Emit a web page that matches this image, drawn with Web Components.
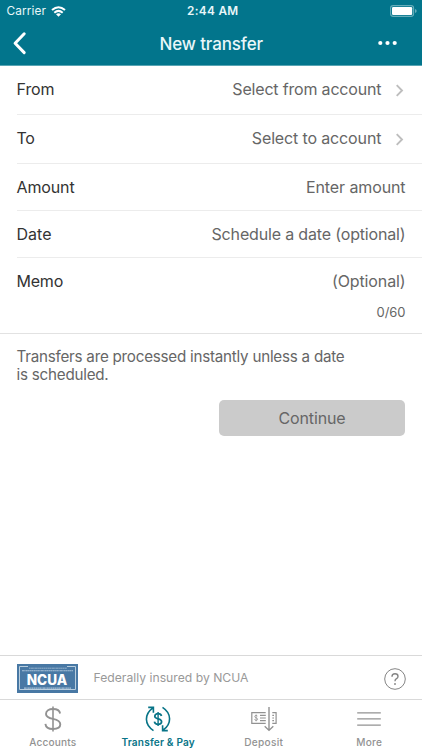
<!DOCTYPE html>
<html lang="en">
<head>
<meta charset="utf-8">
<title>New transfer</title>
<style>
html,body{margin:0;height:100%}
body{font-family:Inter,"Liberation Sans",sans-serif;background:#fff;overflow:hidden}
</style>
</head>
<body>
<transfer-app></transfer-app>
<script>
const define = (name, html, extra) => {
  const t = document.createElement('template');
  t.innerHTML = html;
  customElements.define(name, class extends HTMLElement {
    constructor() {
      super();
      this.attachShadow({mode: 'open'}).append(t.content.cloneNode(true));
    }
    connectedCallback() { if (extra) extra(this, this.shadowRoot); }
  });
};

/* A run of text whose tracking is tuned so that it spans the given width. */
define('fit-text', `<style>
:host{display:block;white-space:nowrap;width:max-content;flex:none}
span{display:inline-block}
</style><span><slot></slot></span>`, (el, root) => {
  const span = root.querySelector('span');
  const n = el.textContent.length;
  span.style.letterSpacing = '0px';
  const natural = span.getBoundingClientRect().width;
  const s = (+el.getAttribute('w') - natural) / n;
  span.style.letterSpacing = s.toFixed(3) + 'px';
});

define('status-bar', `<style>
:host{display:grid;grid-template-columns:1fr auto 1fr;align-items:center;height:22px;padding:0 5px 0 6.5px;color:#e9f7f9;font-size:11.8px;line-height:22px;box-sizing:border-box}
.l{display:flex;align-items:center;gap:5px}
.t{font-weight:600;margin-left:2px}
.r{justify-self:end}
svg{display:block}
</style>
<div class="l"><fit-text w="39.5">Carrier</fit-text>
<svg width="15" height="11" viewBox="0 0 15 11"><g fill="none" stroke="#fff" stroke-width="2"><path d="M1 4.1Q7.5-1.7 14 4.1"/><path d="M3.3 6.7Q7.5 3 11.7 6.7"/></g><path d="M5 8.2Q7.5 6.3 10 8.2L7.5 10.8Z" fill="#fff"/></svg></div>
<fit-text class="t" w="51.5">2:44 AM</fit-text>
<svg class="r" width="27" height="12" viewBox="0 0 27 12"><rect x=".6" y=".6" width="23" height="10.8" rx="2.6" fill="none" stroke="#65adba" stroke-width="1.1"/><rect x="2" y="2" width="20.2" height="8" rx="1.2" fill="#fff"/><path d="M25 4Q26.7 4.6 26.7 6T25 8Z" fill="#65adba"/></svg>`);

define('nav-bar', `<style>
:host{display:grid;grid-template-columns:1fr auto 1fr;align-items:center;height:43px;padding:0 24.5px 0 12px;box-sizing:border-box;color:#e9f7f9;font-size:17px;font-weight:500}
svg{display:block}.r{justify-self:end;margin-top:-2px}
.back{margin-top:-1px}
fit-text{margin-left:13px}
</style>
<svg class="back" width="16" height="24" viewBox="0 0 16 24"><path d="M12.2 2.8 3.1 12.2 12.2 21.6" fill="none" stroke="#fff" stroke-width="3" stroke-linecap="round" stroke-linejoin="round"/></svg>
<fit-text w="103.5">New transfer</fit-text>
<svg class="r" width="20" height="6" viewBox="0 0 20 6" fill="#fff"><circle cx="2.3" cy="3" r="2.1"/><circle cx="9.5" cy="3" r="2.1"/><circle cx="16.7" cy="3" r="2.1"/></svg>`);

define('form-row', `<style>
:host{display:flex;align-items:flex-start;justify-content:space-between;box-sizing:border-box;margin-left:16.5px;padding-right:16.5px;border-bottom:1px solid #ececec;font-size:16px;line-height:20px;color:#666}
.v{display:flex;align-items:center}
.label{color:#333}
.v svg{display:none}
:host([link]) .v svg{display:block;margin:2px 1.2px 0 15px}
</style><div class="label"><slot name="label"></slot></div>
<div class="v"><slot></slot><svg width="8" height="13" viewBox="0 0 8 13"><path d="M.7 1.2 6 6.5 .7 11.8" fill="none" stroke="#bebebe" stroke-width="1.9"/></svg></div>`);

define('primary-button', `<style>
:host{display:flex;align-items:center;justify-content:center;width:186px;height:36.5px;border-radius:5px;background:#cbcbcb;color:#666;font-size:16px}
</style><slot></slot>`);

define('ncua-badge', `<style>
:host{display:block;width:61px;height:29px}svg{display:block}
text{font-family:Inter,"Liberation Sans",sans-serif;font-weight:800;fill:#fff}
</style><svg width="61" height="29" viewBox="0 0 61 29">
<rect width="61" height="29" fill="#4878a4"/>
<path d="M11 2.5H2.5V25.5H58.5V2.5H50" fill="none" stroke="#b9cede" stroke-width="1"/>
<path d="M12 4.2H50" stroke="#a8c1d7" stroke-width="1" stroke-dasharray="1.5 .3 2.2 .2" opacity=".8"/>
<path d="M5 6.7H56" stroke="#a8c1d7" stroke-width="1.1" stroke-dasharray="2 .2 1.3 .3"/>
<path d="M7 24.2H54" stroke="#a8c1d7" stroke-width="1.3" stroke-dasharray="2 .3 1.2 .3"/>
<text x="9.7" y="20.8" font-size="14" textLength="40.5" lengthAdjust="spacingAndGlyphs">NCUA</text></svg>`);

define('insured-bar', `<style>
:host{display:flex;align-items:center;height:45px;box-sizing:border-box;border-top:1px solid #d9d9d9;border-bottom:1px solid #d9d9d9;padding:2px 16.5px 0;color:#999;font-size:12.2px}
fit-text{margin:-2px auto 0 16px}
svg{display:block}
</style><ncua-badge></ncua-badge><fit-text w="155">Federally insured by NCUA</fit-text>
<svg width="22" height="22" viewBox="0 0 22 22" fill="none" stroke="#858585"><circle cx="11" cy="11" r="10.3" stroke-width="1"/><path d="M8 8.7Q8 5.8 11 5.8T14 8.4Q14 9.8 12.5 10.7 11 11.6 11 13.3" stroke-width="1.4"/><circle cx="11" cy="16" r=".95" fill="#858585" stroke="none"/></svg>`);

define('tab-item', `<style>
:host{display:flex;flex-direction:column;align-items:center;color:#929292;font-size:10.1px;line-height:13px;font-weight:500;padding-top:6px;gap:4px}
:host([active]){color:#087487;font-weight:600}
</style><slot name="icon"></slot><slot></slot>`);

define('tab-icon', `<style>:host{display:block;height:26px}svg{display:none;overflow:visible}
:host([name=accounts]) .accounts,:host([name=transfer]) .transfer,:host([name=deposit]) .deposit,:host([name=more]) .more{display:block}</style>
<svg class="accounts" width="18" height="26" viewBox="0 0 18 26" fill="none" stroke="currentColor" stroke-width="1.9"><path d="M16.1 7.5C15.7 4.7 13 3 9 3S2 4.8 2 7.9C2 11.1 5 12 9 12.9S16.3 15 16.3 18.3 13.4 23 9 23 1.8 21.4 1.4 17.8"/><path d="M9 .5V25.5" stroke-width="1.6"/></svg>
<svg class="transfer" width="26" height="26" viewBox="0 0 26 26" fill="none" stroke="currentColor" stroke-width="1.6"><path d="M8.5 24.6C-.8 18.5-.9 8.1 8 1.8M3.2 1.4H8.4V6.7"/><path d="M17.5 1.4C26.8 7.5 26.9 17.9 18 24.2M22.8 24.6H17.6V19.3"/><path d="M16.5 10C16.2 8.5 15 7.7 13.1 7.7 11.1 7.7 9.8 8.6 9.8 10.2 9.8 12 11.4 12.4 13.1 12.8S16.6 13.8 16.6 15.7 15.1 18.3 13.1 18.3 9.7 17.4 9.4 15.6" stroke-width="1.7"/><path d="M13.1 6V20" stroke-width="1.4"/></svg>
<svg class="deposit" width="26" height="26" viewBox="0 0 26 26" fill="none" stroke="currentColor" stroke-width="1.2"><path d="M14.7 6.6H.8V17.4H14.7M21.3 6.6H25.1V17.4H21.3"/><path d="M18 1V24M13.7 20.3 18 24.4 22.3 20.3" stroke-width="1.4"/><path d="M9 9.4H14.8M9 12H14.8M9 14.6H14.8" stroke-width="1.2"/><path d="M21.3 9.4H23M21.3 12H23M21.3 14.6H23" stroke-width="1.2"/><path d="M6.5 10.3C6.3 9.6 5.8 9.4 5.1 9.4 4.2 9.4 3.7 9.8 3.7 10.5 3.7 12.2 6.6 11.4 6.6 13.2 6.6 14 6 14.4 5.1 14.4 4.3 14.4 3.7 14 3.5 13.3M5.1 8.5V15.3" stroke-width=".8"/></svg>
<svg class="more" width="24" height="26" viewBox="0 0 24 26" fill="none" stroke="currentColor" stroke-width="1.4"><path d="M.2 6.9H23.8M.2 12.9H23.8M.2 19.1H23.8"/></svg>`);

define('tab-bar', `<style>:host{display:grid;grid-template-columns:repeat(4,1fr);height:50px}</style>
<tab-item><tab-icon slot="icon" name="accounts"></tab-icon><fit-text w="47">Accounts</fit-text></tab-item>
<tab-item active><tab-icon slot="icon" name="transfer"></tab-icon><fit-text w="73.5">Transfer &amp; Pay</fit-text></tab-item>
<tab-item><tab-icon slot="icon" name="deposit"></tab-icon><fit-text w="39">Deposit</fit-text></tab-item>
<tab-item><tab-icon slot="icon" name="more"></tab-icon><fit-text w="26">More</fit-text></tab-item>`);

define('transfer-app', `<style>
:host{display:flex;flex-direction:column;height:750px;width:422px;background:#fff}
header{background:#02758c;flex:none;border-bottom:1px solid #58a5b4;height:66px;box-sizing:border-box}
.r1{height:49px;padding-top:13px}
.r2{height:49px;padding-top:13.4px}
.r3{height:47px;padding-top:13px}
.r4{height:47px;padding-top:12.6px}
.r5{height:76px;padding-top:12.6px;margin-left:0;padding-left:16.5px;border-color:#e2e2e2}
.memo{display:flex;flex-direction:column;align-items:flex-end;gap:11px}
.count{font-size:13px}
.note{padding:14px 16.5px 0;font-size:15.2px;line-height:18px;color:#666}
primary-button{align-self:flex-end;margin:15.5px 17px 0 0}
insured-bar{margin-top:auto}
</style>
<header><status-bar></status-bar><nav-bar></nav-bar></header>
<form-row class="r1" link><fit-text slot="label" w="38">From</fit-text><fit-text w="149">Select from account</fit-text></form-row>
<form-row class="r2" link><fit-text slot="label" w="18">To</fit-text><fit-text w="129.5">Select to account</fit-text></form-row>
<form-row class="r3"><fit-text slot="label" w="58">Amount</fit-text><fit-text w="99.5">Enter amount</fit-text></form-row>
<form-row class="r4"><fit-text slot="label" w="35">Date</fit-text><fit-text w="194">Schedule a date (optional)</fit-text></form-row>
<form-row class="r5"><fit-text slot="label" w="46.5">Memo</fit-text><div class="memo"><fit-text w="73.5">(Optional)</fit-text><fit-text class="count" w="29">0/60</fit-text></div></form-row>
<div class="note"><fit-text w="328">Transfers are processed instantly unless a date</fit-text><fit-text w="92">is scheduled.</fit-text></div>
<primary-button><fit-text w="67">Continue</fit-text></primary-button>
<insured-bar></insured-bar>
<tab-bar></tab-bar>`);
</script>
</body>
</html>
